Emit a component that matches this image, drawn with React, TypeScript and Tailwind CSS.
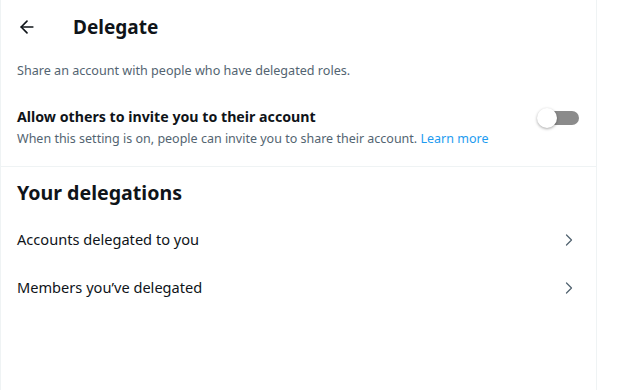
import { ArrowLeft, ChevronRight } from 'lucide-react'

export default function App() {
  return (
    <div className="w-[620px] h-[390px] bg-white overflow-hidden" style={{ fontFamily: '"Noto Sans", "Open Sans", sans-serif' }}>
      <div className="w-[597px] h-full border-l border-r border-[#eff3f4] text-[#0f1419]">
        {/* Header */}
        <div className="h-[53px] flex items-center px-4">
          <div className="w-[56px] flex items-center">
            <ArrowLeft size={20} strokeWidth={2} className="text-[#0f1419]" />
          </div>
          <h1 className="text-[19px] font-bold leading-6">Delegate</h1>
        </div>

        <p className="px-4 pt-[10px] pb-[10px] text-[12.6px] text-[#536471] leading-4">
          Share an account with people who have delegated roles.
        </p>

        {/* Setting */}
        <div className="flex items-start px-4 pt-[18px] pb-[19px] border-b border-[#eff3f4]">
          <div className="flex-1">
            <div className="text-[14.2px] font-bold leading-5">Allow others to invite you to their account</div>
            <div className="text-[12.5px] text-[#536471] leading-4 mt-[4px]">
              When this setting is on, people can invite you to share their account.{' '}
              <span className="text-[#1d9bf0]">Learn more</span>
            </div>
          </div>
          <div className="relative w-[42px] h-[20px] mt-[1px] mr-[1px]">
            <div className="absolute right-0 top-[3px] w-[36px] h-[14px] rounded-full bg-[#8b8b8b]" />
            <div className="absolute left-0 top-0 w-[20px] h-[20px] rounded-full bg-white shadow-[0_1px_3px_rgba(0,0,0,0.35)]" />
          </div>
        </div>

        {/* Delegations */}
        <h2 className="px-4 pt-[14px] pb-[11px] text-[19.6px] font-bold leading-6">Your delegations</h2>
        <div className="flex items-center justify-between px-4 h-[48px]">
          <span className="text-[14.6px]">Accounts delegated to you</span>
          <ChevronRight size={20} strokeWidth={1.5} className="text-[#536471] mr-[1px]" />
        </div>
        <div className="flex items-center justify-between px-4 h-[48px]">
          <span className="text-[14.6px]">Members you’ve delegated</span>
          <ChevronRight size={20} strokeWidth={1.5} className="text-[#536471] mr-[1px]" />
        </div>
      </div>
    </div>
  )
}
